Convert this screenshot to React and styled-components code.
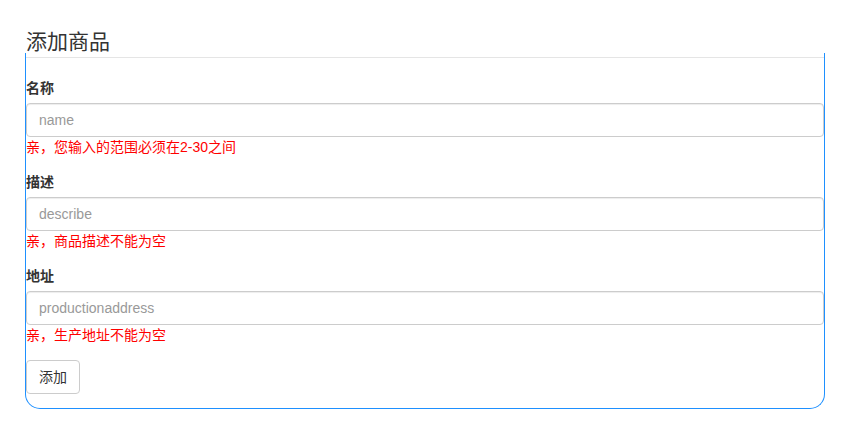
import React from 'react'
import styled, { createGlobalStyle } from 'styled-components'

const GlobalStyle = createGlobalStyle`
  body {
    margin: 0;
    background: #fff;
    font-family: 'Liberation Sans', 'Noto Sans CJK SC', sans-serif;
    font-size: 14px;
    line-height: 20px;
    color: #333;
  }
`

const Page = styled.div`
  padding: 27px 0 0 25px;
  width: 800px;
`

const Title = styled.h2`
  margin: 0;
  height: 26px;
  padding-left: 1px;
  font-size: 21px;
  line-height: 30px;
  font-weight: normal;
  color: #333;
`

const Panel = styled.form`
  border: 1px solid #1e90ff;
  border-top: 0;
  border-radius: 0 0 15px 15px;
  padding: 4px 0 14px;
`

const Divider = styled.div`
  border-top: 1px solid #e5e5e5;
  margin-bottom: 20px;
`

const Group = styled.div`
  margin-bottom: 15px;
`

const Label = styled.label`
  display: block;
  margin-bottom: 5px;
  font-weight: bold;
`

const Input = styled.input`
  display: block;
  box-sizing: border-box;
  width: 100%;
  height: 34px;
  margin: 0;
  padding: 6px 12px;
  border: 1px solid #ccc;
  border-radius: 4px;
  box-shadow: inset 0 1px 1px rgba(0, 0, 0, 0.075);
  font: inherit;
  color: #555;
  outline: none;
  &::placeholder {
    color: #999;
  }
`

const Error = styled.div`
  color: #f00;
`

const Button = styled.button`
  height: 34px;
  padding: 6px 12px;
  background: #fff;
  border: 1px solid #ccc;
  border-radius: 4px;
  font: inherit;
  color: #333;
`

const fields = [
  { label: '名称', placeholder: 'name', error: '亲，您输入的范围必须在2-30之间' },
  { label: '描述', placeholder: 'describe', error: '亲，商品描述不能为空' },
  { label: '地址', placeholder: 'productionaddress', error: '亲，生产地址不能为空' },
]

export default function App() {
  return (
    <Page>
      <GlobalStyle />
      <Title>添加商品</Title>
      <Panel onSubmit={e => e.preventDefault()}>
        <Divider />
        {fields.map(f => (
          <Group key={f.label}>
            <Label>{f.label}</Label>
            <Input placeholder={f.placeholder} />
            <Error>{f.error}</Error>
          </Group>
        ))}
        <Button type="submit">添加</Button>
      </Panel>
    </Page>
  )
}
